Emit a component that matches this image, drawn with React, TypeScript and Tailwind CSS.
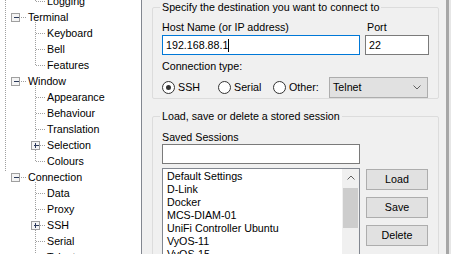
import React from "react";

type Row = { t: string; lvl: 0 | 1; box?: "minus" | "plus" };

const rows: Row[] = [
  { t: "Logging", lvl: 1 },
  { t: "Terminal", lvl: 0, box: "minus" },
  { t: "Keyboard", lvl: 1 },
  { t: "Bell", lvl: 1 },
  { t: "Features", lvl: 1 },
  { t: "Window", lvl: 0, box: "minus" },
  { t: "Appearance", lvl: 1 },
  { t: "Behaviour", lvl: 1 },
  { t: "Translation", lvl: 1 },
  { t: "Selection", lvl: 1, box: "plus" },
  { t: "Colours", lvl: 1 },
  { t: "Connection", lvl: 0, box: "minus" },
  { t: "Data", lvl: 1 },
  { t: "Proxy", lvl: 1 },
  { t: "SSH", lvl: 1, box: "plus" },
  { t: "Serial", lvl: 1 },
  { t: "Telnet", lvl: 1 },
];

const sessions = [
  "Default Settings",
  "D-Link",
  "Docker",
  "MCS-DIAM-01",
  "UniFi Controller Ubuntu",
  "VyOS-11",
  "VyOS-15",
];

function TreeLines() {
  const c = (i: number) => 1 + 16 * i + 0.5;
  const dot = { stroke: "#a0a0a0", strokeWidth: 1, strokeDasharray: "1 1" };
  const vlines: [number, number, number][] = [
    [5.5, 0, 172],
    [35.5, 0, 2],
    [35.5, 22, 66],
    [35.5, 86, 140],
    [35.5, 150, 162],
    [35.5, 182, 220],
    [35.5, 230, 254],
  ];
  const boxes: { x: number; y: number; kind: "minus" | "plus" }[] = [];
  const hlines: [number, number, number][] = [];
  rows.forEach((r, i) => {
    const y = c(i);
    if (r.lvl === 0) {
      hlines.push([21, 27, y]);
      if (r.box) boxes.push({ x: 11.5, y, kind: r.box });
    } else {
      if (r.box) {
        hlines.push([40, 46, y]);
        boxes.push({ x: 31.5, y, kind: r.box });
      } else {
        hlines.push([36, 46, y]);
      }
    }
  });
  return (
    <svg className="absolute left-0 top-0" width="141" height="254" shapeRendering="crispEdges">
      {vlines.map(([x, y1, y2], i) => (
        <line key={"v" + i} x1={x} x2={x} y1={y1} y2={y2} {...dot} />
      ))}
      {hlines.map(([x1, x2, y], i) => (
        <line key={"h" + i} x1={x1} x2={x2} y1={y} y2={y} {...dot} />
      ))}
      {boxes.map((b, i) => (
        <g key={"b" + i}>
          <rect x={b.x} y={b.y - 4} width={8} height={8} fill="#f4f4f4" stroke="#a0a0a0" />
          <line x1={b.x + 2} x2={b.x + 7} y1={b.y} y2={b.y} stroke="#2b3a5a" />
          {b.kind === "plus" && (
            <line x1={b.x + 4} x2={b.x + 4} y1={b.y - 2.5} y2={b.y + 2.5} stroke="#2b3a5a" />
          )}
        </g>
      ))}
    </svg>
  );
}

function Radio({ on }: { on?: boolean }) {
  return (
    <span className="w-[13px] h-[13px] shrink-0 rounded-full border border-[#333333] bg-white flex items-center justify-center">
      {on && <span className="w-[5px] h-[5px] rounded-full bg-[#333333]" />}
    </span>
  );
}

function Chevron({ up }: { up?: boolean }) {
  return (
    <svg width="8" height="5" viewBox="0 0 8 5">
      <path d={up ? "M0.5 4.5 L4 1 L7.5 4.5" : "M0.5 0.5 L4 4 L7.5 0.5"} fill="none" stroke="#606060" strokeWidth="1" />
    </svg>
  );
}

export default function App() {
  return (
    <div className="w-[451px] h-[254px] overflow-hidden flex bg-[#f0f0f0] text-black font-['Liberation_Sans',Arial,sans-serif] text-[10.7px] leading-[13px]">
      {/* Tree */}
      <div className="relative w-[142px] h-[254px] shrink-0 bg-white border-r border-[#828790] overflow-hidden">
        <TreeLines />
        <div className="relative flex flex-col mt-[-7px]">
          {rows.map((r, i) => (
            <div
              key={i}
              className={
                r.lvl === 0
                  ? "h-[16px] flex items-center pl-[28px] whitespace-nowrap"
                  : "h-[16px] flex items-center pl-[47px] whitespace-nowrap"
              }
            >
              {r.t}
            </div>
          ))}
        </div>
      </div>

      {/* Right panel */}
      <div className="w-[304px] shrink-0 flex flex-col pl-[10px]">
        <fieldset className="mt-[1px] w-[287px] h-[100px] border border-[#dcdcdc] rounded-[2px] pl-[9px] pr-[9px]">
          <legend className="ml-[-2px] px-[2px] leading-[13px]">Specify the destination you want to connect to</legend>
          <div className="flex mt-[7px] h-[13px]">
            <span className="w-[204px]">Host Name (or IP address)</span>
            <span className="pl-[1px]">Port</span>
          </div>
          <div className="flex mt-[1px] gap-[5px]">
            <div className="w-[198px] h-[20px] bg-white border border-[#0078d7] flex items-center pl-[3px]">
              <span>192.168.88.1</span>
              <span className="w-[1px] h-[13px] bg-black" />
            </div>
            <div className="w-[64px] h-[20px] bg-white border border-[#7a7a7a] flex items-center pl-[3px]">22</div>
          </div>
          <div className="mt-[5px] h-[13px]">Connection type:</div>
          <div className="mt-[4px] h-[21px] flex items-center">
            <div className="w-[56px] flex items-center gap-[3px]">
              <Radio on />
              <span>SSH</span>
            </div>
            <div className="w-[55px] flex items-center gap-[3px]">
              <Radio />
              <span>Serial</span>
            </div>
            <div className="w-[56px] flex items-center gap-[3px]">
              <Radio />
              <span>Other:</span>
            </div>
            <div className="w-[99px] h-[21px] bg-[#e1e1e1] border border-[#adadad] flex items-center justify-between pl-[3px] pr-[6px]">
              <span>Telnet</span>
              <Chevron />
            </div>
          </div>
        </fieldset>

        <fieldset className="mt-[11px] w-[287px] h-[160px] border border-[#dcdcdc] rounded-[2px] pl-[9px] pr-[9px]">
          <legend className="ml-[-2px] px-[2px] leading-[13px]">Load, save or delete a stored session</legend>
          <div className="mt-[8px] h-[13px]">Saved Sessions</div>
          <div className="w-[198px] h-[20px] bg-white border border-[#7a7a7a]" />
          <div className="mt-[4px] flex gap-[6px]">
            <div className="w-[198px] h-[100px] bg-white border border-[#828790] flex">
              <div className="flex-1 flex flex-col pt-[1px] pl-[4px]">
                {sessions.map((s) => (
                  <div key={s} className="h-[13px] whitespace-nowrap">{s}</div>
                ))}
              </div>
              <div className="w-[17px] h-full bg-[#f0f0f0] flex flex-col items-center">
                <div className="h-[17px] flex items-center justify-center">
                  <Chevron up />
                </div>
                <div className="w-[15px] h-[40px] mt-[2px] bg-[#cdcdcd]" />
                <div className="flex-1" />
                <div className="h-[17px] flex items-start justify-center pt-[7px]">
                  <Chevron />
                </div>
              </div>
            </div>
            <div className="flex flex-col gap-[7px] pt-[1px]">
              <div className="w-[62px] h-[21px] bg-[#e1e1e1] border border-[#adadad] flex items-center justify-center">Load</div>
              <div className="w-[62px] h-[21px] bg-[#e1e1e1] border border-[#adadad] flex items-center justify-center">Save</div>
              <div className="w-[62px] h-[21px] bg-[#e1e1e1] border border-[#adadad] flex items-center justify-center">Delete</div>
            </div>
          </div>
        </fieldset>
      </div>

      <div className="w-[3px] shrink-0 bg-[#a6a6a6]" />
      <div className="flex-1 bg-[#e6e6e6]" />
    </div>
  );
}
